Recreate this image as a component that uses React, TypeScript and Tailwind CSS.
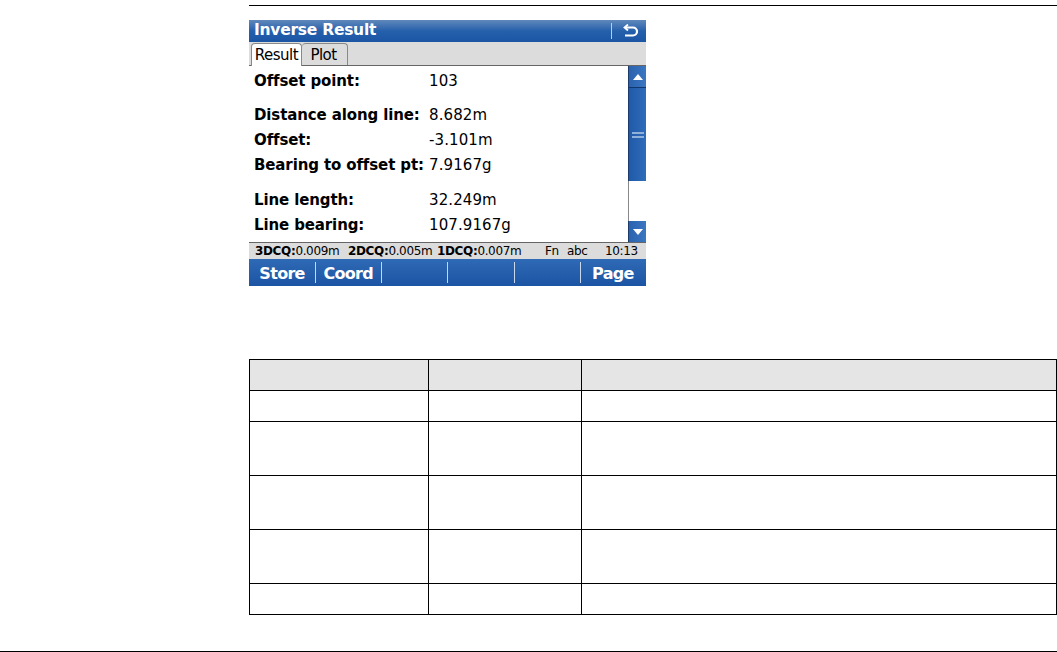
const rows = [
  { label: "Offset point:", value: "103", cls: "mb-[9px]" },
  { label: "Distance along line:", value: "8.682m", cls: "" },
  { label: "Offset:", value: "-3.101m", cls: "" },
  { label: "Bearing to offset pt:", value: "7.9167g", cls: "mb-[10px]" },
  { label: "Line length:", value: "32.249m", cls: "" },
  { label: "Line bearing:", value: "107.9167g", cls: "" },
];

const softkeys = ["Store", "Coord", "", "", "", "Page"];
const tableRows = ["h-[31px]", "h-[54px]", "h-[54px]", "h-[54px]", "h-[31px]"];

function Device() {
  return (
    <div className="ml-[249px] mt-[14px] w-[397px] h-[266px] flex flex-col font-['DejaVu_Sans',sans-serif] text-black overflow-hidden">
      {/* Title bar */}
      <div className="h-[22px] flex items-center bg-gradient-to-b from-[#6088bb] via-[#2560ac] to-[#1b55a4] text-white">
        <span className="pl-[5px] text-[15.5px] font-bold tracking-[-0.25px] flex-1">Inverse Result</span>
        <span className="w-px h-[16px] bg-[#b9cde6] mr-[10px]" />
        <svg width="16" height="14" viewBox="0 0 16 14" className="mr-[8px]" fill="none" stroke="white" strokeWidth="2.2">
          <path d="M3 3.5h8a3.8 3.8 0 0 1 0 8H3" />
          <path d="M6 0.5 2.5 3.5 6 6.5" strokeWidth="1.8" />
        </svg>
      </div>

      {/* Tabs */}
      <div className="h-[24px] flex items-end pl-[2px] bg-[#dcdcdc] border-b border-[#666]">
        <div className="w-[51px] h-[23px] -mb-px z-10 bg-white border border-b-0 border-[#888] rounded-t-[4px] text-[15px] tracking-[-0.5px] text-center">
          Result
        </div>
        <div className="w-[46px] h-[22px] bg-[#dcdcdc] border border-l-0 border-b-0 border-[#888] rounded-t-[4px] text-[15px] tracking-[-0.6px] text-center pr-[2px]">
          Plot
        </div>
      </div>

      {/* Content */}
      <div className="h-[176px] flex bg-white">
        <div className="flex-1 pt-[3px] pl-[5px]">
          {rows.map((r) => (
            <div key={r.label} className={`h-[25px] flex items-center ${r.cls}`}>
              <span className="w-[175px] text-[15px] font-bold tracking-[-0.12px] whitespace-nowrap">{r.label}</span>
              <span className="text-[15px] tracking-[0.1px]">{r.value}</span>
            </div>
          ))}
        </div>
        {/* Scrollbar */}
        <div className="w-[18px] flex flex-col">
          <div className="h-[22px] flex items-center justify-center bg-gradient-to-r from-[#2a62ae] to-[#3b77c2] border-l border-l-[#1c3a6a] border-b border-b-[#10386f]">
            <span className="w-0 h-0 border-x-[5px] border-x-transparent border-b-[6px] border-b-white" />
          </div>
          <div className="h-[93px] flex items-center justify-center bg-gradient-to-r from-[#1f5aa8] to-[#2f6cb9] border-l border-l-[#1c3a6a]">
            <span className="w-[12px] h-[6px] border-y-2 border-[#8fb0d8]" />
          </div>
          <div className="flex-1 bg-white border-l border-l-[#888]" />
          <div className="h-[21px] flex items-center justify-center bg-gradient-to-r from-[#2a62ae] to-[#3b77c2] border-l border-l-[#1c3a6a]">
            <span className="w-0 h-0 border-x-[5px] border-x-transparent border-t-[6px] border-t-white" />
          </div>
        </div>
      </div>

      {/* Status bar */}
      <div className="h-[17px] flex items-center pl-[6px] bg-[#dcdcdc] border-t border-[#666] text-[12px] tracking-[-0.35px] whitespace-nowrap">
        <span className="w-[93px]"><b>3DCQ:</b>0.009m</span>
        <span className="w-[89px]"><b>2DCQ:</b>0.005m</span>
        <span className="w-[108px]"><b>1DCQ:</b>0.007m</span>
        <span className="w-[22px]">Fn</span>
        <span className="w-[38px]">abc</span>
        <span>10:13</span>
      </div>

      {/* Softkeys */}
      <div className="h-[27px] grid grid-cols-6 bg-gradient-to-b from-[#2f6ab6] to-[#1b54a3] text-white">
        {softkeys.map((k, i) => (
          <div key={i} className="relative flex items-center justify-center pt-[2px] text-[16px] font-bold tracking-[-0.7px]">
            {k}
            {i < 5 && <span className="absolute right-[-1px] top-[3px] w-px h-[21px] bg-[#c8d8ec]" />}
          </div>
        ))}
      </div>
    </div>
  );
}

export default function App() {
  return (
    <div className="w-[1057px] h-[652px] flex flex-col bg-white overflow-hidden">
      <div className="ml-[249px] mt-[5px] h-px bg-black" />
      <Device />
      <table className="ml-[249px] mt-[73px] w-[808px] border-collapse table-fixed">
        <colgroup>
          <col className="w-[179px]" />
          <col className="w-[153px]" />
          <col />
        </colgroup>
        <tbody>
          <tr className="h-[31px] bg-[#e5e5e5]">
            <td className="border border-black" />
            <td className="border border-black" />
            <td className="border border-black" />
          </tr>
          {tableRows.map((h, i) => (
            <tr key={i} className={h}>
              <td className="border border-black" />
              <td className="border border-black" />
              <td className="border border-black" />
            </tr>
          ))}
        </tbody>
      </table>
      <div className="mt-auto h-px bg-black" />
    </div>
  );
}
